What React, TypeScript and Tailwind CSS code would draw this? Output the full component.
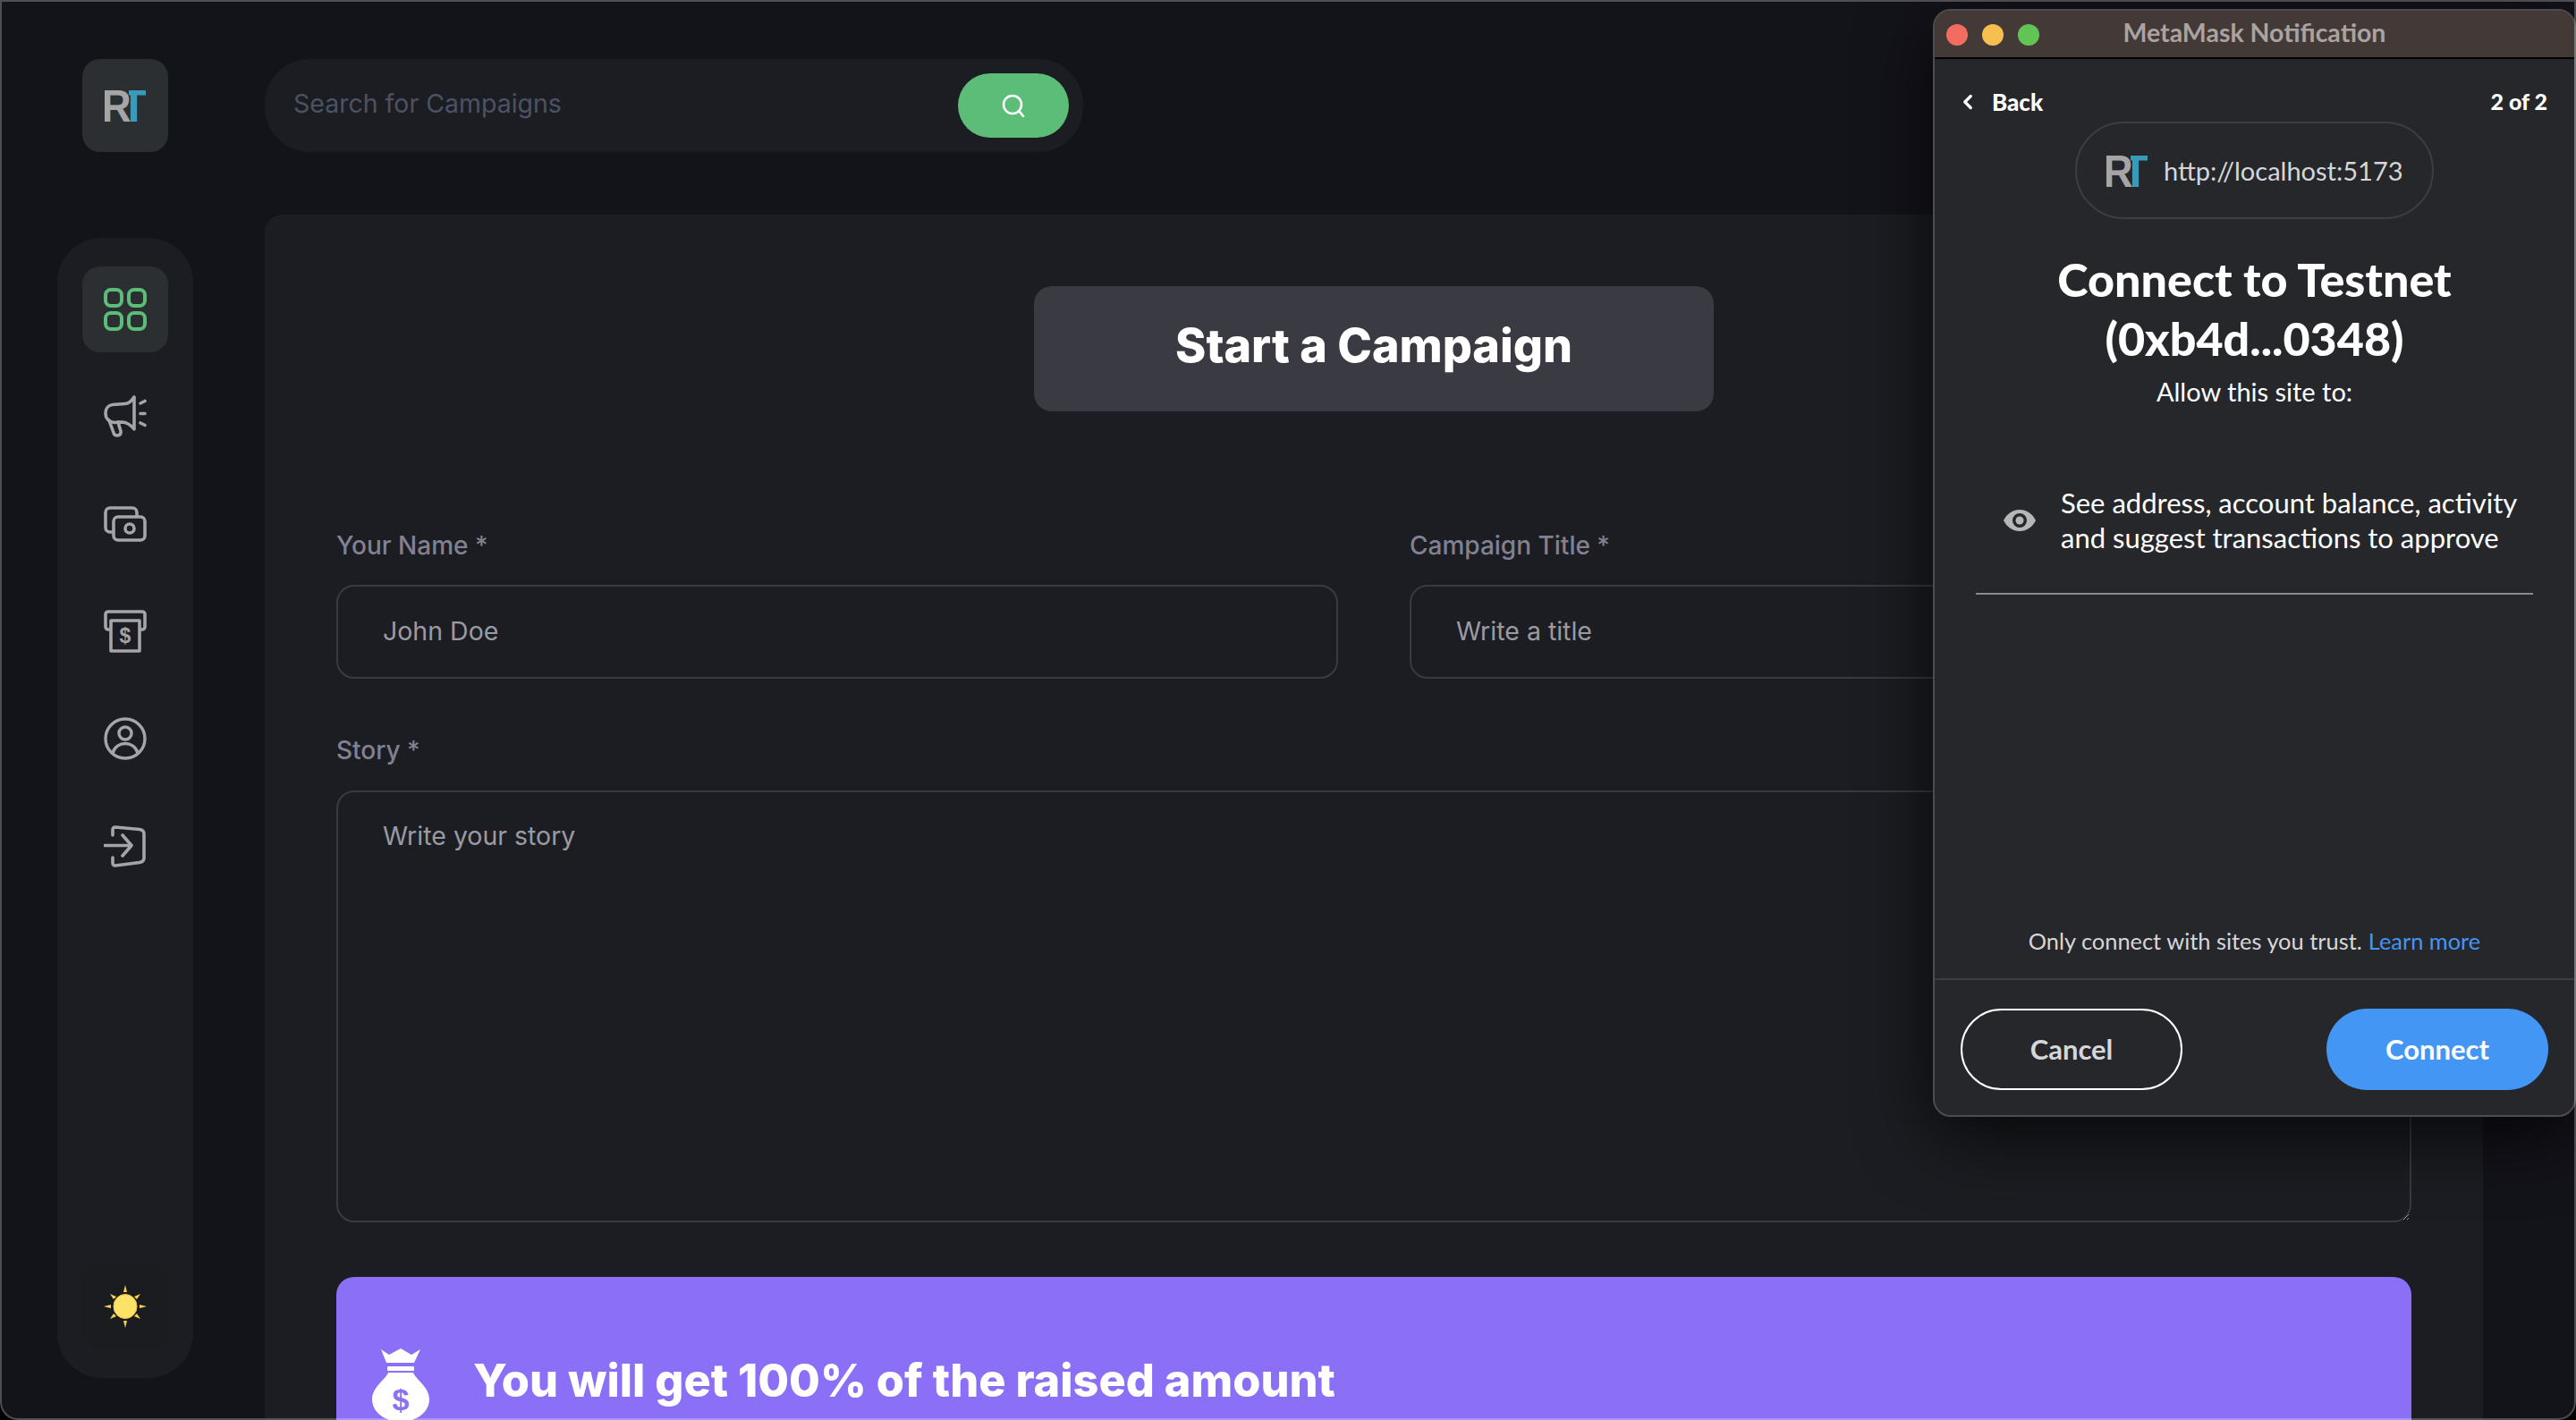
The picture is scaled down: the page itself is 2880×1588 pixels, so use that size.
import { ChevronLeft } from 'lucide-react';

const RtLogo = () => (
  <svg viewBox="0 0 46 36" className="h-[36px] w-[46px] font-['Liberation_Sans'] font-bold">
    <defs>
      <clipPath id="rt-t">
        <rect x="27" y="0" width="19" height="36" />
      </clipPath>
    </defs>
    <g clipPath="url(#rt-t)">
      <text x="32.500" y="36" textAnchor="middle" fontSize="50" fill="#3b9ab8">T</text>
    </g>
    <text transform="translate(-3.500 36) scale(0.92 1)" fontSize="50" fill="#a5a5a7">R</text>
  </svg>
);

const DashboardIcon = () => (
  <svg viewBox="0 0 48 48" className="h-12 w-12" fill="none" stroke="#5cbd78" strokeWidth="4">
    <rect x="2" y="2" width="18" height="18" rx="6" />
    <rect x="28" y="2" width="18" height="18" rx="6" />
    <rect x="2" y="28" width="18" height="18" rx="6" />
    <rect x="28" y="28" width="18" height="18" rx="6" />
  </svg>
);

const CampaignIcon = () => (
  <svg viewBox="0 0 48 48" className="h-12 w-12" fill="none" stroke="#a5a5a9" strokeWidth="3.6" strokeLinecap="round" strokeLinejoin="round">
    <path d="M34 2v36c-4-5-8-8-14-8l-8 .5C6 30 2 26 2 20c0-5 3-9 8-9.500l14-1c4 0 7-3 10-7.500Z" />
    <path d="M6 28l5 14c1 4 7 4 8 0 .5-2-.5-3-1-5l-2-7" />
    <path d="M41 9l5-2.500M41 20.500h5M41 31l5 2.500" />
  </svg>
);

const PaymentIcon = () => (
  <svg viewBox="0 0 48 40" className="h-10 w-12" fill="none" stroke="#a5a5a9" strokeWidth="3.6" strokeLinejoin="round">
    <path d="M37 11V7a5 5 0 0 0-5-5H7a5 5 0 0 0-5 5v17a5 5 0 0 0 5 5h3" />
    <rect x="11" y="12" width="35" height="26" rx="5" />
    <circle cx="29" cy="25" r="5" />
  </svg>
);

const WithdrawIcon = () => (
  <svg viewBox="0 0 48 48" className="h-12 w-12" fill="none" stroke="#a5a5a9" strokeWidth="3.6" strokeLinejoin="round">
    <path d="M8 22H5a3 3 0 0 1-3-3V5a3 3 0 0 1 3-3h38a3 3 0 0 1 3 3v14a3 3 0 0 1-3 3h-3" />
    <path d="M8 46V12h32v34Z" />
    <text x="24" y="37" textAnchor="middle" fontSize="23" fontWeight="700" fill="#a5a5a9" stroke="none" className="font-['Liberation_Sans']">$</text>
  </svg>
);

const ProfileIcon = () => (
  <svg viewBox="0 0 48 48" className="h-12 w-12" fill="none" stroke="#a5a5a9" strokeWidth="3.4">
    <circle cx="24" cy="24" r="22" />
    <circle cx="24" cy="18" r="7" />
    <path d="M10 40c2-7 8-10.500 14-10.500S36 33 38 40" />
  </svg>
);

const LogoutIcon = () => (
  <svg viewBox="0 0 48 48" className="h-12 w-12" fill="none" stroke="#a5a5a9" strokeWidth="3.6" strokeLinecap="round" strokeLinejoin="round">
    <path d="M10 12V6c0-2 1-3 3-3l27 2.500c3 .5 5 2 5 5v27c0 3-2 4.500-5 5L13 46c-2 .2-3-1-3-3v-6" />
    <path d="M1 23.500h29M21 12l10 11.500L21 35" />
  </svg>
);

const SunIcon = () => (
  <svg viewBox="0 0 48 48" className="h-12 w-12">
    <ellipse cx="24" cy="24" rx="13" ry="13.500" fill="#fde268" stroke="#f0c94a" strokeWidth="1" />
    <g fill="#f7d24f">
      <path d="M24 0l2 8h-4Z" />
      <path d="M24 48l2-8h-4Z" />
      <path d="M0 24l8-2v4Z" />
      <path d="M48 24l-8-2v4Z" />
      <path d="M7 10l7 3-3 3Z" />
      <path d="M41 10l-7 3 3 3Z" />
      <path d="M7 38l7-3-3-3Z" />
      <path d="M41 38l-7-3 3-3Z" />
    </g>
  </svg>
);

const MoneyBag = () => (
  <svg viewBox="0 0 64 82" className="h-[82px] w-16 shrink-0" fill="#fff">
    <path d="M10 1l9 6 13-7 12 7 10-6-7 15H16Z" />
    <rect x="17" y="20" width="30" height="5" rx="1" />
    <path d="M18 27h28c3 8 18 16 18 30 0 14-14 25-32 25S0 71 0 57c0-14 15-22 18-30Z" />
    <text x="32" y="69" textAnchor="middle" fontSize="34" fontWeight="700" fill="#8b6ff6" className="font-['Liberation_Sans']">$</text>
  </svg>
);

const menu = [CampaignIcon, PaymentIcon, WithdrawIcon, ProfileIcon, LogoutIcon];

function Field({ label, placeholder }: { label: string; placeholder: string }) {
  return (
    <label className="flex flex-1 flex-col">
      <span className="h-[40px] text-[28px] leading-[40px] font-medium text-[#808191]">{label}</span>
      <input
        placeholder={placeholder}
        className="mt-[24px] h-[105px] w-full rounded-[20px] border-2 border-[#3a3a43] bg-transparent px-[50px] pb-[3px] text-[28.5px] outline-none placeholder:text-[#9a9aa4]"
      />
    </label>
  );
}

export default function App() {
  return (
    <div className="h-[1588px] w-[2880px] overflow-hidden bg-black font-['Inter',sans-serif]">
      <div className="relative h-full w-full overflow-hidden rounded-b-[20px] bg-[#13131a]">
        <div className="flex h-full gap-[80px] pl-[64px] pr-[104px]">
          <aside className="flex w-[152px] shrink-0 flex-col items-center pt-[66px]">
            <div className="flex h-[104px] w-[96px] items-center justify-center rounded-[20px] bg-[#2c2f32]">
              <RtLogo />
            </div>
            <nav className="mt-[96px] flex h-[1275px] w-full flex-col items-center gap-[24px] rounded-[50px] bg-[#1c1d22] py-[32px]">
              <div className="flex h-[96px] w-[96px] items-center justify-center rounded-[20px] bg-[#2c2f32]">
                <DashboardIcon />
              </div>
              {menu.map((Icon, i) => (
                <div key={i} className="flex h-[96px] w-[96px] items-center justify-center">
                  <Icon />
                </div>
              ))}
              <div className="mt-auto flex h-[97px] w-[96px] items-center justify-center rounded-[20px] bg-[#1b1c20]">
                <SunIcon />
              </div>
            </nav>
          </aside>

          <main className="flex min-w-0 flex-1 flex-col pt-[66px]">
            <div className="flex h-[104px] w-[915px] shrink-0 items-center rounded-[50px] bg-[#1c1d22] pl-[32px] pr-[16px]">
              <input
                placeholder="Search for Campaigns"
                className="h-full min-w-0 flex-1 bg-transparent pb-[6px] text-[28.5px] outline-none placeholder:text-[#4b5264]"
              />
              <button className="flex h-[72px] w-[124px] items-center justify-center rounded-[40px] bg-[#5cbd78]">
                <svg viewBox="0 0 26 26" className="h-[26px] w-[26px]" fill="none" stroke="#fff" strokeWidth="2.6" strokeLinecap="round">
                  <circle cx="12" cy="12" r="10" />
                  <path d="M20 20l4 5" />
                </svg>
              </button>
            </div>

            <section className="mt-[70px] h-[1400px] shrink-0 rounded-t-[20px] bg-[#1c1d22] px-[80px] pt-[80px]">
              <div className="mx-auto flex h-[140px] w-[760px] items-center justify-center rounded-[20px] bg-[#3a3a43] pb-[6px]">
                <h1 className="text-[52px] font-extrabold text-white">Start a Campaign</h1>
              </div>
              <div className="mt-[130px] flex gap-[80px]">
                <Field label="Your Name *" placeholder="John Doe" />
                <Field label="Campaign Title *" placeholder="Write a title" />
              </div>
              <label className="mt-[60px] flex flex-col">
                <span className="h-[40px] text-[28px] leading-[40px] font-medium text-[#808191]">Story *</span>
                <textarea
                  placeholder="Write your story"
                  className="mt-[25px] h-[483px] w-full rounded-[20px] border-2 border-[#3a3a43] bg-transparent px-[50px] pb-[30px] pt-[28px] text-[28.5px] outline-none [color-scheme:dark] placeholder:text-[#9a9aa4]"
                />
              </label>
              <div className="mt-[61px] flex h-[240px] items-start gap-[49px] rounded-[20px] bg-[#8b6ff6] pl-[40px] pt-[80px]">
                <MoneyBag />
                <h2 className="text-[50.4px] leading-[72px] font-extrabold text-white">You will get 100% of the raised amount</h2>
              </div>
            </section>
          </main>
        </div>

        <div className="absolute left-[2161px] top-[10px] flex h-[1239px] w-[719px] flex-col rounded-[20px] border-2 border-[#4d4d50] bg-[#25272b] font-['Lato',sans-serif] shadow-[0_20px_80px_rgba(0,0,0,0.75)]">
          <div className="relative flex h-[54px] shrink-0 items-center justify-center rounded-t-[18px] border-b-2 border-black bg-[#433a38] pb-[4px]">
            <div className="absolute left-[13px] top-[15px] flex gap-[16px]">
              <span className="h-6 w-6 rounded-full bg-[#f26d60]" />
              <span className="h-6 w-6 rounded-full bg-[#f6bf4f]" />
              <span className="h-6 w-6 rounded-full bg-[#61c454]" />
            </div>
            <span className="text-[28.5px] font-bold text-[#aaa3a1]">MetaMask Notification</span>
          </div>

          <div className="mt-[28px] flex h-[40px] shrink-0 items-center justify-between px-[30px] text-[26px] font-black text-white">
            <span className="flex items-center gap-[14px]">
              <ChevronLeft className="-ml-[6px] h-[26px] w-[26px]" strokeWidth={3} />
              Back
            </span>
            <span className="text-[25px]">2 of 2</span>
          </div>

          <div className="mx-auto mt-[2px] flex h-[109px] w-[401px] shrink-0 items-center gap-[18px] rounded-[55px] border-2 border-[#3b3e42] pl-[33px] text-[29px] text-[#d6d6d8]">
            <RtLogo />
            <span>http://localhost:5173</span>
          </div>

          <h2 className="mt-[34px] text-center text-[52px] leading-[66px] font-black text-white">
            Connect to Testnet
            <br />
            (0xb4d...0348)
          </h2>
          <p className="mt-[9px] text-center text-[29px] leading-[36px] text-white">Allow this site to:</p>

          <div className="mx-[46px] mt-[87px] flex items-center gap-[28px] border-b-2 border-[#8a8b8e] pb-[42px]">
            <svg viewBox="0 0 36 24" className="ml-[31px] h-[24px] w-[36px] shrink-0">
              <path fillRule="evenodd" fill="#b5b6b8" d="M18 0C27 0 33 6 36 12c-3 6-9 12-18 12S3 18 0 12C3 6 9 0 18 0Zm0 4a8 8 0 1 0 0 16 8 8 0 0 0 0-16Z" />
              <circle cx="18" cy="12" r="4.500" fill="#b5b6b8" />
            </svg>
            <p className="whitespace-nowrap text-[31px] leading-[39px] text-white">
              See address, account balance, activity
              <br />
              and suggest transactions to approve
            </p>
          </div>

          <div className="flex-1" />

          <p className="mb-[22px] flex h-[40px] items-center justify-center gap-[7px] text-[25.4px] text-[#d6d6d8]">
            <span>Only connect with sites you trust.</span>
            <span className="text-[#4496f5]">Learn more</span>
          </p>

          <div className="flex justify-between border-t-2 border-[#3b3e42] px-[29px] pb-[28px] pt-[32px]">
            <button className="h-[91px] w-[248px] rounded-[46px] border-2 border-white text-[31px] font-bold text-[#d6d6d8]">Cancel</button>
            <button className="h-[91px] w-[248px] rounded-[46px] bg-[#4496f5] text-[31px] font-bold text-white">Connect</button>
          </div>
        </div>

        <div className="pointer-events-none absolute inset-0 rounded-b-[20px] border-2 border-white/25" />
      </div>
    </div>
  );
}
